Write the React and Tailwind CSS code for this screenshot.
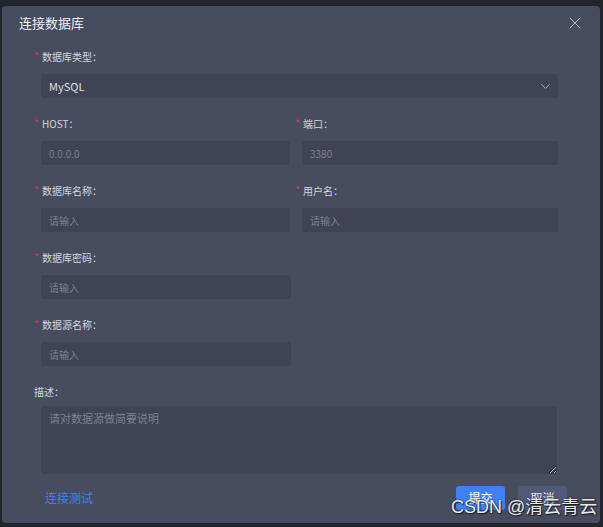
import React from "react";
import { X, ChevronDown } from "lucide-react";

const font = { fontFamily: '"Noto Sans CJK SC", "Noto Sans", sans-serif' };

function Label({ text, required = true }) {
  return (
    <div className="flex items-center h-[14px] mb-[11px] text-[10px] text-[#d3d6de]">
      {required ? <span className="w-[8px] text-[#e5333f] text-[10px] leading-none">*</span> : null}
      <span>{text}：</span>
    </div>
  );
}

function Field({ label, placeholder, className = "" }) {
  return (
    <div className={`mb-[18px] ${className}`}>
      <Label text={label} />
      <div className="ml-[7px] h-[24px] rounded-[3px] bg-[#3f4355] flex items-center px-[8px] text-[10px] text-[#7c8191]">
        {placeholder}
      </div>
    </div>
  );
}

export default function App() {
  return (
    <div className="w-[603px] h-[527px] bg-[#23252d] pt-[6px] pl-[2px] pr-[3px] relative" style={font}>
      <div className="h-[517px] rounded-[4px] bg-[#474c5e] flex flex-col">
        {/* header */}
        <div className="h-[34px] flex items-center justify-between pl-[17px] pr-[15px]">
          <span className="text-[13px] text-[#eef0f4]">连接数据库</span>
          <X size={20} strokeWidth={1} className="text-[#c9ccd4]" />
        </div>

        {/* body */}
        <div className="pl-[32px] pr-[42px] pt-[9px] flex-1">
          <div className="mb-[18px]">
            <Label text="数据库类型" />
            <div className="ml-[7px] h-[24px] rounded-[3px] bg-[#3f4355] flex items-center justify-between pl-[8px] pr-[5px] text-[11px] text-[#dfe1e7]">
              <span>MySQL</span>
              <ChevronDown size={15} strokeWidth={1.2} className="text-[#c9ccd4]" />
            </div>
          </div>

          <div className="grid grid-cols-2">
            <Field label="HOST" placeholder="0.0.0.0" className="mr-[6px]" />
            <Field label="端口" placeholder="3380" className="-ml-[1px]" />
            <Field label="数据库名称" placeholder="请输入" className="mr-[6px]" />
            <Field label="用户名" placeholder="请输入" className="-ml-[1px]" />
          </div>

          <Field label="数据库密码" placeholder="请输入" className="w-[257px]" />
          <Field label="数据源名称" placeholder="请输入" className="w-[257px]" />

          <div className="mt-[3px]">
            <div className="flex items-center h-[14px] mb-[8px] text-[10px] text-[#d3d6de]">描述：</div>
            <textarea
              placeholder="请对数据源做简要说明"
              className="ml-[7px] w-[516px] h-[68px] block rounded-[3px] bg-[#3f4355] px-[8px] py-[4px] text-[11px] text-[#dfe1e7] placeholder:text-[#7c8191] outline-none"
              style={font}
            />
          </div>
        </div>

        {/* footer */}
        <div className="h-[35px] mb-[8px] flex items-center justify-between pl-[43px] pr-[33px]">
          <span className="text-[12px] text-[#3d82f4]">连接测试</span>
          <div className="flex gap-[13px]">
            <button className="w-[49px] h-[24px] rounded-[3px] bg-[#3f80f3] text-[12px] text-white">提交</button>
            <button className="w-[49px] h-[24px] rounded-[3px] bg-[#515b77] text-[12px] text-[#e4e6ec]">取消</button>
          </div>
        </div>
      </div>

      {/* watermark */}
      <div
        className="absolute left-[451px] top-[496px] text-[18px] leading-[22px] text-[#e8e8ea] whitespace-nowrap [text-shadow:0_0_2px_#1a1c22,1px_1px_1px_#1a1c22]"
        style={{ fontFamily: '"Liberation Sans", "Noto Sans CJK SC", sans-serif' }}
      >
        CSDN @清云青云
      </div>
    </div>
  );
}
